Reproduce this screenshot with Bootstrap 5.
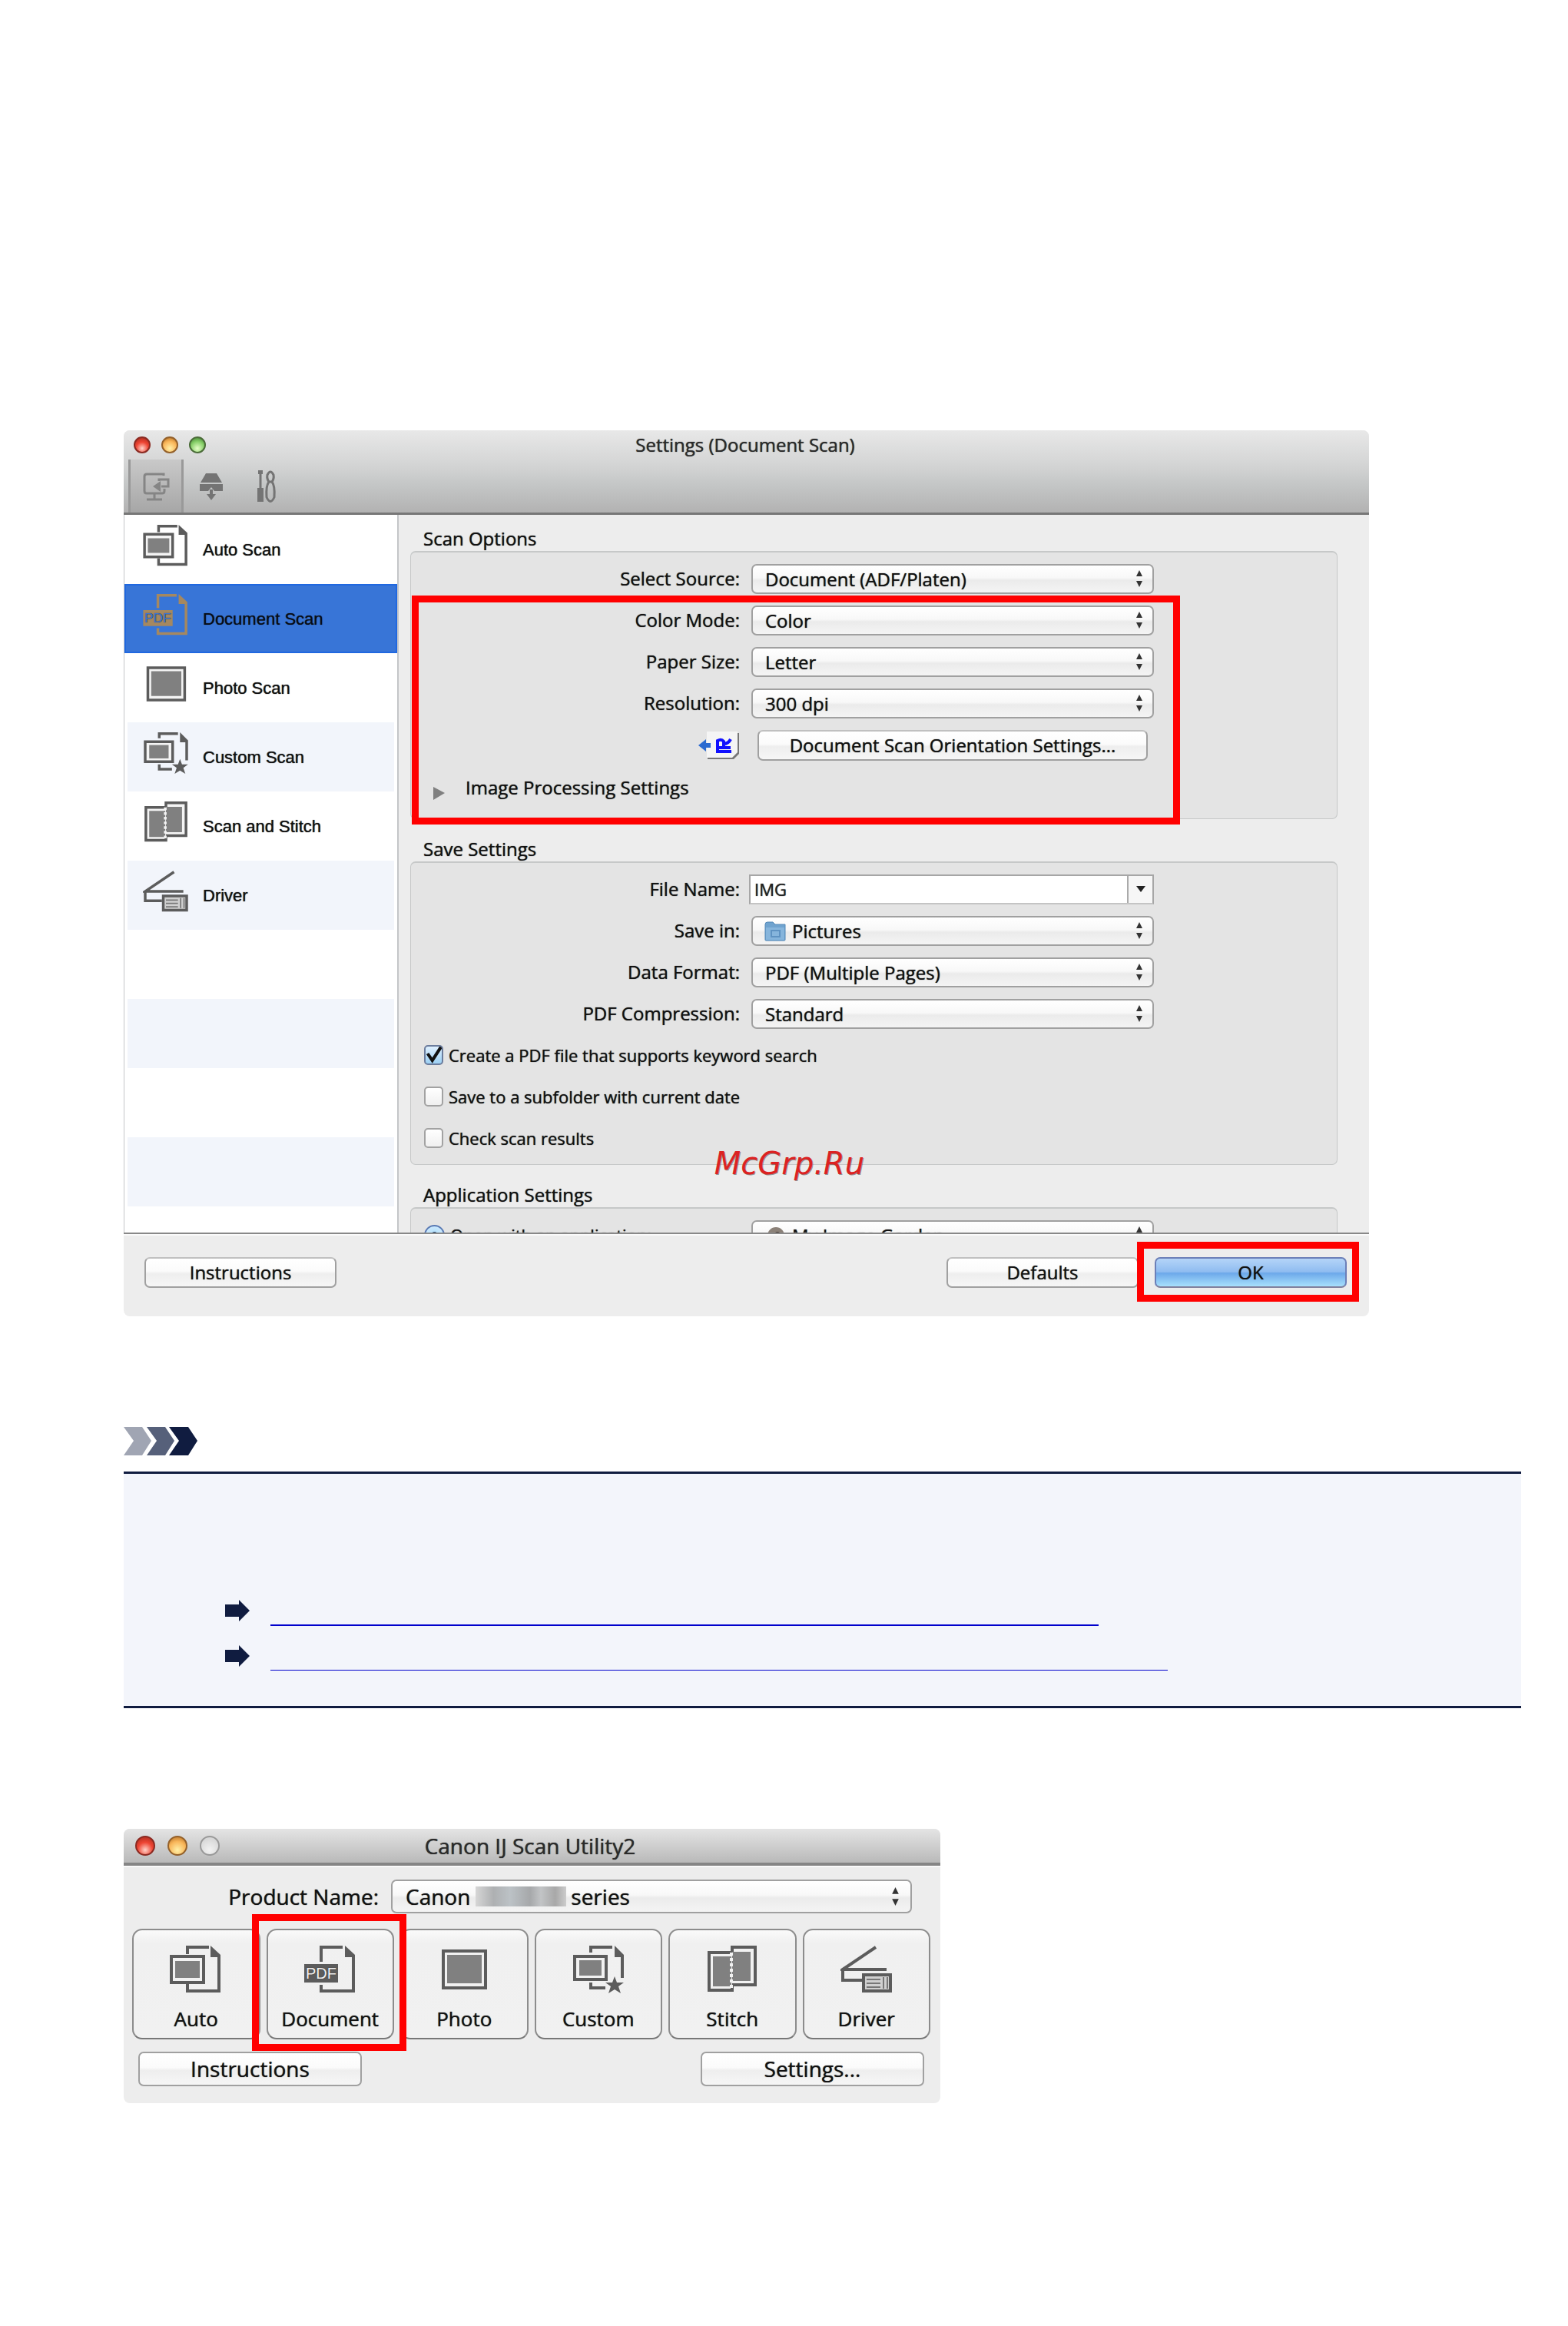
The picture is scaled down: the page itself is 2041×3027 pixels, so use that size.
<!DOCTYPE html>
<html lang="en">
<head>
<meta charset="utf-8">
<meta name="viewport" content="width=device-width, initial-scale=1">
<title>Document Scan Settings</title>
<link href="https://cdn.jsdelivr.net/npm/bootstrap@5.3.0/dist/css/bootstrap.min.css" rel="stylesheet">
<style>
  body { background: #fff; color: #111; font-family: "Open Sans", "Noto Sans", sans-serif; font-size: 24px; line-height: 30px; }
  .page { padding: 560px 61px 60px 161px; }
  .mac, .mac button, .mac select, .mac input { text-shadow: 0 0 1px #222; }
  .mac { background: #ededed; border-radius: 8px; overflow: hidden; }
  .mac-lg { max-width: 1621px; }
  .mac-sm { max-width: 1063px; font-size: 28px; }

  /* title bars */
  .chrome { background: linear-gradient(#e8e8e8, #d2d3d3 45%, #c8caca 60%, #b2b2b2); border-bottom: 3px solid #777; }
  .chrome-sm { background: linear-gradient(#e4e4e4, #b9b9b9); border-bottom: 4px solid #858585; height: 48px; }
  .bar { display: grid; grid-template-columns: 1fr auto 1fr; align-items: center; height: 38px; padding: 0 16px 0 13px; color: #2b2b2b; }
  .chrome-sm .bar { height: 44px; padding: 0 20px 0 15px; }
  .light { width: 22px; height: 22px; border-radius: 50%; border: 2px solid #7c4a3c; }
  .mac-sm .light { width: 26px; height: 26px; }
  .l-red { background: radial-gradient(circle at 50% 75%, #ffd2c8, #ee4433 50%, #a02a1c); border-color: #8a2a22; }
  .l-amber { background: radial-gradient(circle at 50% 75%, #fff0a8, #f9b65a 55%, #b06a20); border-color: #93602a; }
  .l-green { background: radial-gradient(circle at 50% 75%, #e6ffc8, #86cf68 55%, #3c7a2c); border-color: #4a6b38; }
  .l-off { background: radial-gradient(circle at 50% 75%, #f2f2f2, #cfcfcf); border-color: #999; }
  .tools { padding-left: 6px; }
  .tool { width: 72px; height: 69px; border: 0; background: none; color: #747474; }
  .tool.on { background: linear-gradient(#c9c9c9, #a6a6a6); border: solid #999; border-width: 0 3px; color: #858585; }

  /* list of scan types */
  .panes { height: 936px; border-bottom: 2px solid #888; }
  .side { width: 358px; flex: none; border: solid #c4c6c8; border-width: 0 2px 0 1px; font-family: "Liberation Sans", sans-serif; font-size: 22px;
    background: linear-gradient(#fff 50%, #f2f5fb 50%) 4px 0 / 347px 180px repeat-y #fff; }
  .side button { display: flex; align-items: center; gap: 18px; height: 90px; padding: 2px 0 0 24px; border: 0; background: none; color: #111; text-align: left; }
  .side svg { width: 60px; height: 54px; margin-bottom: 12px; color: #5c5c5c; --fillc: #808080; --paper: #f4f4f4; }
  .side .picked { background: #3875d7; box-shadow: inset 0 0 0 2px #2068e0; color: #050c18; }
  .side .picked svg { color: #a58860; --paper: #3875d7; }

  /* option groups */
  .main { flex: 1; padding: 16px 41px 0 15px; overflow: hidden; }
  .group { margin-bottom: 24px; }
  .group legend { float: none; font-size: 24px; line-height: 30px; margin: 0 0 1px; padding-left: 17px; }
  .well-box { background: #e4e4e4; border: 1px solid #c6c8c8; border-top-width: 2px; border-radius: 7px; padding: 15px 17px; position: relative; }
  .well-box.roomy { padding-bottom: 21px; }
  .line { display: flex; align-items: center; height: 38px; margin-bottom: 16px; }
  .line.tall { height: 40px; }
  .line:last-child { margin-bottom: 0; }
  .line > .name { flex: 0 0 411px; text-align: right; margin-right: 15px; }
  .line > .wide { flex: 0 0 524px; }
  .picker, .push { border: 2px solid #a0a0a0; border-radius: 7px; background-color: #f3f3f3; color: #111; padding: 0 16px; }
  .picker { appearance: none; width: 100%; height: 39px; line-height: 33px;
    background: url("data:image/svg+xml,%3Csvg xmlns='http://www.w3.org/2000/svg' viewBox='0 0 10 24'%3E%3Cpath d='M5 1l4 8H1zM5 23l4-8H1z' fill='%23333'/%3E%3C/svg%3E") right 12px center / 10px 24px no-repeat, linear-gradient(#fff, #f8f8f8 45%, #ebebeb 55%, #f4f4f4); }
  .push { height: 40px; background: linear-gradient(#fff, #fbfbfb 45%, #eee 55%, #f6f6f6); border-top-color: #c0c0c0; line-height: 34px; }
  .with-icon { position: relative; }
  .with-icon svg { position: absolute; left: 17px; top: 7px; width: 28px; height: 26px; }
  .with-icon .picker { padding-left: 51px; }
  .combo { display: flex; height: 39px; border: 2px solid #a6a6a6; border-bottom-color: #c4c4c4; background: #fff; margin-left: -3px; }
  .combo input { flex: 1; min-width: 0; border: 0; padding: 0 5px; font-size: 22px; color: #222; background: none; }
  .combo button { width: 33px; border: 0; border-left: 2px solid #aaa; background: #f6f6f6; padding: 0; display: flex; align-items: center; justify-content: center; }
  .tick { appearance: none; width: 25px; height: 26px; margin: 0; border: 2px solid #a2a2a2; border-radius: 5px; background: linear-gradient(#fff, #f0f0f0); flex: none; }
  .tick:checked { border-color: #6b7c9c; background: url("data:image/svg+xml,%3Csvg xmlns='http://www.w3.org/2000/svg' viewBox='0 0 24 24'%3E%3Cpath d='M4 10l6 9L22 0' fill='none' stroke='%23111' stroke-width='4'/%3E%3C/svg%3E") center / 24px 24px no-repeat, linear-gradient(#dff0ff, #9cd0f4); }
  .dot { appearance: none; width: 27px; height: 27px; margin: 0; border: 2px solid #5a7ab4; border-radius: 50%; background: radial-gradient(circle, #1d3c66 0 4px, #b9e2fb 5px, #d8edff); flex: none; }
  .opt { font-size: 22px; gap: 7px; display: flex; align-items: center; }
  .opt-col { flex: 0 0 426px; }

  /* red call-outs lying over the windows */
  .callout { position: absolute; border: 9px solid #f00; pointer-events: none; z-index: 3; }
  .callout-fields { left: 1px; top: 56px; width: 1000px; height: 298px; }
  .callout-ok { inset: -20px -16px -18px -23px; }
  .callout-doc { inset: -21px -18px -17px -21px; }
  .stamp { position: absolute; right: 615px; bottom: -22px; z-index: 2; color: #dc2222; font: italic 40px/46px "DejaVu Sans", sans-serif; text-shadow: 1px 1px 0 rgba(60,60,60,.5); }

  .foot { border-top: 2px solid #fafafa; padding: 28px 29px 37px 27px; gap: 21px; }
  .foot .push { width: 250px; }
  .push.go { border-color: #6b7fb8; border-bottom-color: #80809c; background: linear-gradient(#b4d4f8, #8fbcf0 48%, #6ca8ea 52%, #a8e0fc); }

  /* note */
  .chevrons { margin-top: 144px; }
  .note { margin-top: 21px; background: #f3f5fb; border: solid #101c40; border-width: 3px 0; padding: 164px 0 46px 132px; }
  .topic { height: 34px; display: flex; gap: 27px; margin-bottom: 25px; }
  .topic:last-child { height: 33px; margin-bottom: 0; }
  .topic svg { width: 32px; height: 28px; flex: none; }
  .topic a { border-bottom: 2px solid #00c; width: 1078px; }
  .topic:last-child a { border-bottom-width: 1px; width: 1168px; }

  /* launcher */
  .mac-sm { margin-top: 157px; }
  .launch { border-top: 2px solid #fafafa; padding: 16px 13px 22px 11px; }
  .launch .caption { width: 321px; text-align: right; }
  .launch .picker { height: 44px; line-height: 38px; background-size: 11px 26px, auto; background-position: right 14px center, 0 0; padding: 0 17px; }
  .smudge { position: absolute; left: 110px; top: 9px; width: 118px; height: 26px; background: linear-gradient(90deg, #d6d6d6, #aeb0b2 20%, #bcc2c6 38%, #a6a8aa 60%, #c2c4c6 72%, #a8a8a8 88%, #ccc); }
  .tile { position: relative; flex: 1 1 0; height: 144px; border: 2px solid #8c8c8c; border-bottom-color: #777; border-radius: 13px; background: linear-gradient(#fafafa, #f0f0f0 12%, #f1f1f1); color: #111; font-size: 26px; padding: 9px 0 0; }
  .tile svg { display: block; width: 68px; height: 62px; margin: 0 auto 18px; color: #5c5c5c; --fillc: #808080; --paper: #f1f1f1; }
  .launch .push { width: 291px; height: 45px; line-height: 39px; border-top-color: #a0a0a0; }
</style>
</head>
<body>
<svg class="d-none" aria-hidden="true">
  <symbol id="i-auto" viewBox="0 0 68 62">
    <path d="M23 11V2h28M23 50v9h41V15" fill="none" stroke="currentColor" stroke-width="4"/>
    <path d="M53 0l13 12v3H53z" fill="currentColor"/>
    <path d="M2 14h42v34H2z" fill="var(--paper)" stroke="currentColor" stroke-width="4"/>
    <path d="M7 20h32v22H7z" fill="var(--fillc)"/>
  </symbol>
  <symbol id="i-doc" viewBox="0 0 68 62">
    <path d="M22 21V2h28M22 51v8h42V15" fill="none" stroke="currentColor" stroke-width="4"/>
    <path d="M53 0l13 12v3H53z" fill="currentColor"/>
    <path d="M0 24h44v24H0z" fill="currentColor"/>
    <text x="22" y="43" text-anchor="middle" font-family="Liberation Sans, sans-serif" font-size="20" fill="var(--paper)">PDF</text>
  </symbol>
  <symbol id="i-photo" viewBox="0 0 68 62">
    <path d="M7 7h55v48H7z" fill="var(--paper)" stroke="currentColor" stroke-width="4"/>
    <path d="M12 12h45v37H12z" fill="var(--fillc)"/>
  </symbol>
  <symbol id="i-custom" viewBox="0 0 68 62">
    <path d="M24 9V2h28M24 48v7h19M65 42V15" fill="none" stroke="currentColor" stroke-width="4"/>
    <path d="M55 0l12 12v3H55z" fill="currentColor"/>
    <path d="M3 14h41v30H3z" fill="var(--paper)" stroke="currentColor" stroke-width="4"/>
    <path d="M9 19h29v20H9z" fill="var(--fillc)"/>
    <path d="M55 40l3 8h9l-7 5 3 9-8-5-8 5 3-9-7-5h9z" fill="currentColor"/>
  </symbol>
  <symbol id="i-stitch" viewBox="0 0 68 62">
    <path d="M34 9H4v49h30v-5M34 9V2h30v49H34" fill="var(--paper)" stroke="currentColor" stroke-width="4"/>
    <path d="M9 14h24v39H9zM34 8h24v38H34z" fill="var(--fillc)"/>
    <path d="M33 9v46" stroke="var(--paper)" stroke-width="4" stroke-dasharray="4 3"/>
  </symbol>
  <symbol id="i-driver" viewBox="0 0 68 62">
    <path d="M46 2L3 31h57M3 31v14h25" fill="none" stroke="currentColor" stroke-width="4"/>
    <path d="M30 38h35v21H30z" fill="#d0d0d0" stroke="currentColor" stroke-width="4"/>
    <path d="M34 44h18M34 49h18M34 54h18M56 41v15M61 41v15" stroke="#777" stroke-width="2"/>
  </symbol>
  <symbol id="i-arrow" viewBox="0 0 32 28">
    <path d="M0 6h18V0l14 14-14 14v-6H0z" fill="#101c40"/>
  </symbol>
</svg>

<main class="page">
  <section class="mac mac-lg" aria-label="Settings">
    <header class="chrome">
      <div class="bar">
        <div class="d-flex" style="gap:14px"><span class="light l-red"></span><span class="light l-amber"></span><span class="light l-green"></span></div>
        <div>Settings (Document Scan)</div>
      </div>
      <div class="tools d-flex">
        <button class="tool on" aria-label="Scanning from a computer"><svg width="36" height="40" viewBox="0 0 36 40"><path d="M28 6V4H6q-3 0-3 3v19q0 3 3 3h20q3 0 3-3v-3M6 37h20M16 30v6" fill="none" stroke="currentColor" stroke-width="3"/><path d="M22 13V11h12v9h-9" fill="none" stroke="currentColor" stroke-width="3"/><path d="M14 20l10-7v14z" fill="currentColor"/></svg></button>
        <button class="tool" aria-label="Scanning from the operation panel"><svg width="30" height="40" viewBox="0 0 30 40"><path d="M8 3h14l7 12H1zM0 17h30v9H19l-4-5-4 5H0z" fill="currentColor"/><path d="M13 24h4v6h4l-6 8-6-8h4z" fill="currentColor"/></svg></button>
        <button class="tool" aria-label="General settings"><svg width="26" height="46" viewBox="0 0 26 46"><path d="M5 3v22" stroke="currentColor" stroke-width="3"/><path d="M2 2h6v5H2zM1 25h8v18H1z" fill="currentColor"/><path d="M16 17q-3-4-2-9 4-8 8 0 1 5-2 9M16 17q-4 5-3 20 5 11 10 0 1-15-3-20z" fill="none" stroke="currentColor" stroke-width="3"/></svg></button>
      </div>
    </header>

    <div class="panes d-flex">
      <nav class="side d-flex flex-column" aria-label="Scan types">
        <button><svg><use href="#i-auto"/></svg>Auto Scan</button>
        <button class="picked"><svg><use href="#i-doc"/></svg>Document Scan</button>
        <button><svg><use href="#i-photo"/></svg>Photo Scan</button>
        <button><svg><use href="#i-custom"/></svg>Custom Scan</button>
        <button><svg><use href="#i-stitch"/></svg>Scan and Stitch</button>
        <button><svg><use href="#i-driver"/></svg>Driver</button>
      </nav>

      <div class="main">
        <fieldset class="group">
          <legend>Scan Options</legend>
          <div class="well-box roomy">
            <div class="callout callout-fields"></div>
            <div class="line"><label class="name" for="src">Select Source:</label><div class="wide"><select id="src" class="picker"><option>Document (ADF/Platen)</option></select></div></div>
            <div class="line"><label class="name" for="mode">Color Mode:</label><div class="wide"><select id="mode" class="picker"><option>Color</option></select></div></div>
            <div class="line"><label class="name" for="size">Paper Size:</label><div class="wide"><select id="size" class="picker"><option>Letter</option></select></div></div>
            <div class="line"><label class="name" for="res">Resolution:</label><div class="wide"><select id="res" class="picker"><option>300 dpi</option></select></div></div>
            <div class="line tall">
              <span class="name"><svg width="54" height="38" viewBox="0 0 54 38"><path d="M12 3h41v27l-7 7H12z" fill="#777"/><path d="M11 1h40v27l-7 7H11z" fill="#f5f5f5"/><path d="M0 19l10-8v5h6v6h-6v5z" fill="#2a6ad0"/><path d="M23 27h20M25 25V13q5-3 8 1v9M33 17q6 0 9-6M26 22h16" fill="none" stroke="#11f" stroke-width="4"/></svg></span>
              <div class="wide d-flex px-2"><button class="push flex-fill px-0">Document Scan Orientation Settings...</button></div>
            </div>
            <div class="line ps-2"><svg width="18" height="18" viewBox="0 0 18 18" class="mt-3 ms-1"><path d="M0 0l15 8-15 9z" fill="#808080"/></svg><span class="ps-4">Image Processing Settings</span></div>
          </div>
        </fieldset>

        <fieldset class="group">
          <legend>Save Settings</legend>
          <div class="well-box">
            <div class="stamp">McGrp.Ru</div>
            <div class="line"><label class="name" for="fname">File Name:</label><div class="wide"><div class="combo"><input id="fname" type="text" value="IMG"><button aria-label="Recent names"><svg width="12" height="8" viewBox="0 0 12 8"><path d="M0 0h12L6 8z" fill="#222"/></svg></button></div></div></div>
            <div class="line"><label class="name" for="dir">Save in:</label><div class="wide with-icon"><select id="dir" class="picker"><option>Pictures</option></select><svg viewBox="0 0 28 26"><path d="M1 4q0-3 3-3h7l3 3h13v20q0 1-1 1H2q-1 0-1-1z" fill="#6fa3cf" stroke="#5288b8"/><path d="M2 8h24v16H2z" fill="#86b5dc"/><path d="M9 12h11v8H9z" fill="none" stroke="#5f93c2" stroke-width="2"/></svg></div></div>
            <div class="line"><label class="name" for="fmt">Data Format:</label><div class="wide"><select id="fmt" class="picker"><option>PDF (Multiple Pages)</option></select></div></div>
            <div class="line"><label class="name" for="cmp">PDF Compression:</label><div class="wide"><select id="cmp" class="picker"><option>Standard</option></select></div></div>
            <div class="line"><label class="opt"><input class="tick" type="checkbox" checked>Create a PDF file that supports keyword search</label></div>
            <div class="line"><label class="opt"><input class="tick" type="checkbox">Save to a subfolder with current date</label></div>
            <div class="line"><label class="opt"><input class="tick" type="checkbox">Check scan results</label></div>
          </div>
        </fieldset>

        <fieldset class="group">
          <legend>Application Settings</legend>
          <div class="well-box">
            <div class="line"><label class="opt opt-col"><input class="dot" type="radio" checked>Open with an application:</label><div class="wide with-icon"><select class="picker" aria-label="Application"><option>My Image Garden</option></select><svg viewBox="0 0 28 26"><circle cx="15" cy="13" r="11" fill="#8b8178"/><circle cx="17" cy="13" r="5" fill="#3a2c26"/></svg></div></div>
          </div>
        </fieldset>
      </div>
    </div>

    <footer class="foot d-flex">
      <button class="push">Instructions</button>
      <button class="push ms-auto">Defaults</button>
      <div class="position-relative"><button class="push go">OK</button><div class="callout callout-ok"></div></div>
    </footer>
  </section>

  <svg class="chevrons d-block" width="96" height="37" viewBox="0 0 96 37" aria-hidden="true">
    <path d="M0 0h24l12 18-12 19H0l13-19z" fill="#a0a5b3"/><path d="M30 0h24l12 18-12 19H30l13-19z" fill="#56607a"/><path d="M59 0h25l12 18-12 19H59l13-19z" fill="#101c40"/>
  </svg>
  <section class="note">
    <div class="topic"><svg><use href="#i-arrow"/></svg><a href="#" aria-label="Related topic 1"></a></div>
    <div class="topic"><svg><use href="#i-arrow"/></svg><a href="#" aria-label="Related topic 2"></a></div>
  </section>

  <section class="mac mac-sm" aria-label="Scan utility">
    <header class="chrome-sm">
      <div class="bar">
        <div class="d-flex gap-3"><span class="light l-red"></span><span class="light l-amber"></span><span class="light l-off"></span></div>
        <div>Canon IJ Scan Utility2</div>
      </div>
    </header>
    <div class="launch">
      <div class="d-flex align-items-center pe-4 mb-3">
        <label for="product" class="caption">Product Name:</label>
        <div class="position-relative flex-fill ms-3"><select id="product" class="picker"><option>Canon&nbsp;&nbsp;&nbsp;&nbsp;&nbsp;&nbsp;&nbsp;&nbsp;&nbsp;&nbsp;&nbsp;&nbsp;&nbsp;&nbsp;&nbsp;&nbsp;&nbsp;&nbsp;series</option></select><div class="smudge"></div></div>
      </div>
      <div class="d-flex gap-2 pt-1">
        <button class="tile"><svg><use href="#i-auto"/></svg>Auto</button>
        <button class="tile"><svg><use href="#i-doc"/></svg>Document<span class="callout callout-doc"></span></button>
        <button class="tile"><svg><use href="#i-photo"/></svg>Photo</button>
        <button class="tile"><svg><use href="#i-custom"/></svg>Custom</button>
        <button class="tile"><svg><use href="#i-stitch"/></svg>Stitch</button>
        <button class="tile"><svg><use href="#i-driver"/></svg>Driver</button>
      </div>
      <div class="d-flex justify-content-between px-2 mt-3"><button class="push">Instructions</button><button class="push">Settings...</button></div>
    </div>
  </section>
</main>
<script src="https://cdn.jsdelivr.net/npm/bootstrap@5.3.0/dist/js/bootstrap.bundle.min.js"></script>
</body>
</html>
